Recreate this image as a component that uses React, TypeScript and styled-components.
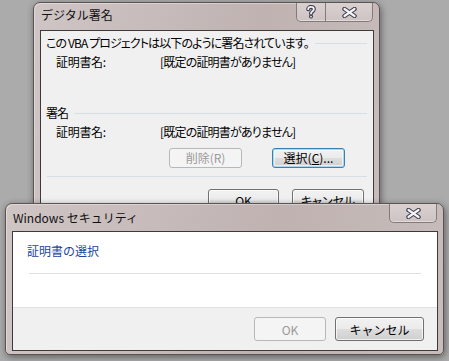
import React from 'react';
import styled, { createGlobalStyle } from 'styled-components';

const GlobalStyle = createGlobalStyle`
  html, body {
    margin: 0;
    padding: 0;
  }
  body {
    background: #ababab;
    font-family: "Noto Sans CJK JP", "Noto Sans", sans-serif;
    font-size: 12px;
    color: #000;
  }
`;

const Desktop = styled.div`
  position: relative;
  width: 449px;
  height: 361px;
  overflow: hidden;
  background: #ababab;
`;

const Frame = styled.div<{ $left: number; $top: number; $width: number; $height?: number }>`
  position: absolute;
  left: ${p => p.$left}px;
  top: ${p => p.$top}px;
  width: ${p => p.$width}px;
  ${p => (p.$height ? `height: ${p.$height}px;` : '')}
  box-sizing: border-box;
  display: flex;
  flex-direction: column;
  border: 1px solid #5b5354;
  border-radius: 7px 7px 5px 5px;
  padding: 0 5px 3px 6px;
  background: linear-gradient(100deg, #cfc5c4 0%, #c6baba 35%, #bfb2b1 60%, #c8bdbc 100%);
  box-shadow: 1px 2px 7px rgba(0, 0, 0, 0.45), inset 1px 1px 0 rgba(255, 255, 255, 0.35);
`;

const TitleBar = styled.div`
  height: 27px;
  display: flex;
  justify-content: space-between;
  align-items: flex-start;
`;

const TitleText = styled.div<{ $top: number }>`
  margin-top: ${p => p.$top}px;
  padding-left: 1px;
  line-height: 16px;
  font-size: 12px;
  color: #111;
  white-space: nowrap;
`;

const CaptionGroup = styled.div`
  display: flex;
  height: 18px;
  margin-right: 1px;
  border: 1px solid #857a7a;
  border-top: none;
  border-radius: 0 0 5px 5px;
  overflow: hidden;
  background: linear-gradient(#d9d1d0, #cdc3c2);
  box-shadow: inset 0 -1px 0 rgba(255, 255, 255, 0.4);
`;

const CaptionButton = styled.div<{ $w: number; $divider?: boolean }>`
  width: ${p => p.$w}px;
  display: flex;
  align-items: center;
  justify-content: center;
  ${p => (p.$divider ? 'border-right: 1px solid #857a7a;' : '')}
`;

const Client = styled.div<{ $bg: string }>`
  flex: 1;
  display: flex;
  flex-direction: column;
  border: 1px solid #3f3a3a;
  background: ${p => p.$bg};
`;

/* first dialog */

const Sig = styled.div`
  display: flex;
  flex-direction: column;
  font-feature-settings: "palt" 1;
  font-size: 12px;
  line-height: 14px;
`;

const GroupHead = styled.div<{ $top: number }>`
  display: flex;
  align-items: center;
  gap: 6px;
  margin-top: ${p => p.$top}px;
  padding: 0 6px 0 5px;
  height: 14px;
  white-space: nowrap;
  letter-spacing: -0.9px;
`;

const HeadLine = styled.div`
  flex: 1;
  height: 1px;
  background: #d5dfe5;
`;

const InfoRow = styled.div`
  display: flex;
  margin-top: 5px;
  padding-left: 15px;
  height: 14px;
  white-space: nowrap;
  letter-spacing: -0.8px;
`;

const InfoLabel = styled.span`
  width: 104px;
  letter-spacing: -0.3px;
`;

const ButtonRow = styled.div<{ $top: number; $indent: number; $gap: number }>`
  display: flex;
  gap: ${p => p.$gap}px;
  margin-top: ${p => p.$top}px;
  padding-left: ${p => p.$indent}px;
`;

const Btn = styled.div<{ $w: number; $h: number; $state?: 'disabled' | 'default' }>`
  box-sizing: border-box;
  width: ${p => p.$w}px;
  height: ${p => p.$h}px;
  display: flex;
  align-items: center;
  justify-content: center;
  border-radius: 3px;
  font-size: 12px;
  white-space: nowrap;
  border: 1px solid
    ${p => (p.$state === 'disabled' ? '#b5b9bc' : p.$state === 'default' ? '#3c7fb1' : '#707070')};
  color: ${p => (p.$state === 'disabled' ? '#9a9a9a' : '#000')};
  background: ${p =>
    p.$state === 'disabled'
      ? '#f4f4f4'
      : 'linear-gradient(#f2f2f2 0%, #ebebeb 48%, #dddddd 52%, #cfcfcf 100%)'};
  box-shadow: ${p =>
    p.$state === 'default'
      ? 'inset 0 0 0 1px #a6d8f6, inset 0 0 0 2px rgba(255,255,255,0.6)'
      : p.$state === 'disabled'
      ? 'none'
      : 'inset 0 0 0 1px rgba(255,255,255,0.7)'};
`;

const Separator = styled.div<{ $top: number; $left: number; $right: number; $color: string }>`
  height: 1px;
  margin-top: ${p => p.$top}px;
  margin-left: ${p => p.$left}px;
  margin-right: ${p => p.$right}px;
  background: ${p => p.$color};
`;

/* second dialog */

const Main = styled.div`
  height: 75px;
  display: flex;
  flex-direction: column;
  background: #fff;
`;

const Instruction = styled.div`
  margin-top: 11px;
  padding-left: 14px;
  line-height: 16px;
  font-size: 12px;
  color: #1a45a0;
`;

const Footer = styled.div`
  height: 43px;
  box-sizing: border-box;
  border-top: 1px solid #dfdfdf;
  background: #f0f0f0;
  display: flex;
  justify-content: flex-end;
  align-items: flex-start;
  gap: 9px;
  padding: 9px 13px 0 0;
`;

const CloseIcon = () => (
  <svg width="15" height="11" viewBox="0 0 15 11">
    <path d="M2.5 2 L12.5 9 M12.5 2 L2.5 9" stroke="#3d3d4e" strokeWidth="4.4" strokeLinecap="round" />
    <path d="M2.5 2 L12.5 9 M12.5 2 L2.5 9" stroke="#f4f4f6" strokeWidth="2.2" strokeLinecap="round" />
  </svg>
);

const HelpIcon = () => (
  <svg width="10" height="14" viewBox="0 0 10 14">
    <path d="M2.2 4.2 C2.2 1.2 7.8 1.2 7.8 4.2 C7.8 6.4 5 6.2 5 8.6" stroke="#3d3d4e" strokeWidth="4" fill="none" strokeLinecap="round" />
    <circle cx="5" cy="11.6" r="2" fill="#3d3d4e" />
    <path d="M2.2 4.2 C2.2 1.2 7.8 1.2 7.8 4.2 C7.8 6.4 5 6.2 5 8.6" stroke="#f4f4f6" strokeWidth="1.8" fill="none" strokeLinecap="round" />
    <circle cx="5" cy="11.6" r="0.9" fill="#f4f4f6" />
  </svg>
);

export default function App() {
  return (
    <Desktop>
      <GlobalStyle />

      <Frame $left={33} $top={2} $width={347} $height={240}>
        <TitleBar>
          <TitleText $top={4}>デジタル署名</TitleText>
          <CaptionGroup>
            <CaptionButton $w={28} $divider>
              <HelpIcon />
            </CaptionButton>
            <CaptionButton $w={46}>
              <CloseIcon />
            </CaptionButton>
          </CaptionGroup>
        </TitleBar>
        <Client $bg="#f0f0f0">
          <Sig>
            <GroupHead $top={5}>
              <span>この VBA プロジェクトは以下のように署名されています。</span>
              <HeadLine />
            </GroupHead>
            <InfoRow>
              <InfoLabel>証明書名:</InfoLabel>
              <span>[既定の証明書がありません]</span>
            </InfoRow>
            <GroupHead $top={37}>
              <span>署名</span>
              <HeadLine />
            </GroupHead>
            <InfoRow>
              <InfoLabel>証明書名:</InfoLabel>
              <span>[既定の証明書がありません]</span>
            </InfoRow>
            <ButtonRow $top={9} $indent={128} $gap={30}>
              <Btn $w={73} $h={20} $state="disabled">削除(R)</Btn>
              <Btn $w={73} $h={20} $state="default">
                選択(<u>C</u>)...
              </Btn>
            </ButtonRow>
            <Separator $top={8} $left={6} $right={6} $color="#d5dfe5" />
            <ButtonRow $top={12} $indent={167} $gap={13}>
              <Btn $w={71} $h={23}>OK</Btn>
              <Btn $w={72} $h={23}>キャンセル</Btn>
            </ButtonRow>
          </Sig>
        </Client>
      </Frame>

      <Frame $left={5} $top={203} $width={439}>
        <TitleBar>
          <TitleText $top={6}>Windows セキュリティ</TitleText>
          <CaptionGroup>
            <CaptionButton $w={46}>
              <CloseIcon />
            </CaptionButton>
          </CaptionGroup>
        </TitleBar>
        <Client $bg="#fff">
          <Main>
            <Instruction>証明書の選択</Instruction>
            <Separator $top={14} $left={16} $right={16} $color="#dfdfdf" />
          </Main>
          <Footer>
            <Btn $w={72} $h={24} $state="disabled">OK</Btn>
            <Btn $w={89} $h={24}>キャンセル</Btn>
          </Footer>
        </Client>
      </Frame>
    </Desktop>
  );
}
